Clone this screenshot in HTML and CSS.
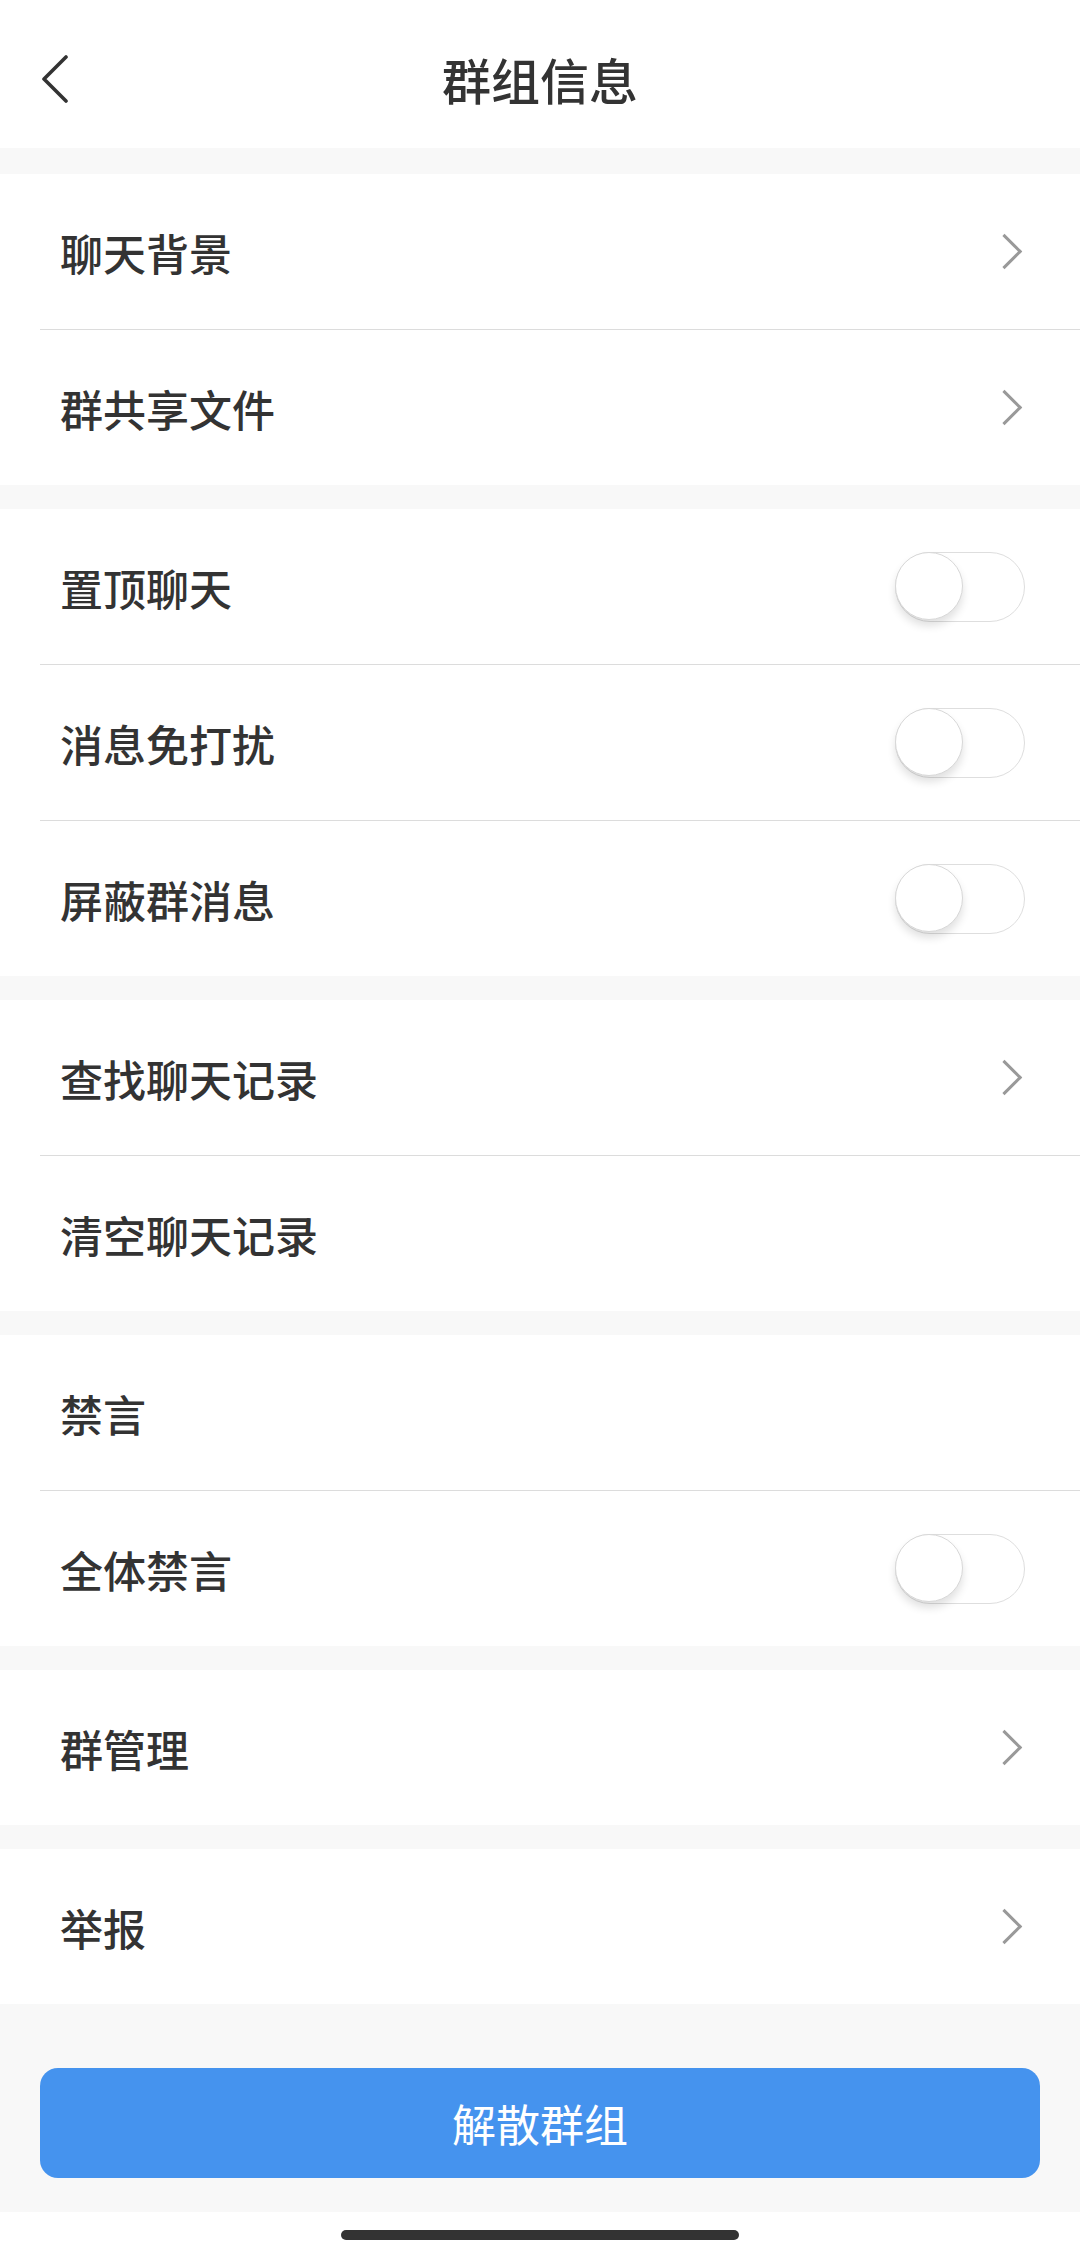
FILE: index.html
```html
<!DOCTYPE html>
<html lang="zh-CN">
  <head>
    <meta charset="UTF-8" />
    <meta name="viewport" content="width=device-width, initial-scale=1.0" />
    <title>群组信息</title>
    <link rel="stylesheet" href="styles.css">
  </head>

  <body>
    <div class="page">
      <!-- 顶部导航 -->
      <header class="nav">
        <svg class="back" width="40" height="60" viewBox="0 0 40 60">
          <polyline points="26,14 4,36 26,58" fill="none" stroke="#333" stroke-width="3.6" stroke-linecap="round" stroke-linejoin="round" />
        </svg>
        <h1>群组信息</h1>
      </header>

      <section class="group">
        <div class="row"><span>聊天背景</span><i class="arrow"></i></div>
        <div class="row"><span>群共享文件</span><i class="arrow"></i></div>
      </section>

      <section class="group">
        <div class="row"><span>置顶聊天</span><i class="switch"></i></div>
        <div class="row"><span>消息免打扰</span><i class="switch"></i></div>
        <div class="row"><span>屏蔽群消息</span><i class="switch"></i></div>
      </section>

      <section class="group">
        <div class="row"><span>查找聊天记录</span><i class="arrow"></i></div>
        <div class="row"><span>清空聊天记录</span></div>
      </section>

      <section class="group">
        <div class="row"><span>禁言</span></div>
        <div class="row"><span>全体禁言</span><i class="switch"></i></div>
      </section>

      <section class="group">
        <div class="row"><span>群管理</span><i class="arrow"></i></div>
      </section>

      <section class="group">
        <div class="row"><span>举报</span><i class="arrow"></i></div>
      </section>

      <div class="footer">
        <button class="danger">解散群组</button>
      </div>

      <div class="home"><span></span></div>
    </div>
  </body>
</html>
```

FILE: styles.css
```css
/* 기본 */
body {
  margin: 0;
  background: #fff;
  font-family: "Noto Sans CJK SC", "Noto Sans", sans-serif;
  color: #333;
}

.page {
  width: 1080px;
  height: 2254px;
  background: #f8f8f8;
  display: flex;
  flex-direction: column;
}

/* Nav */
.nav {
  height: 148px;
  margin-bottom: 26px;
  background: #fff;
  display: flex;
  align-items: center;
  justify-content: center;
  position: relative;
}

.nav h1 {
  margin: 8px 0 0;
  font-size: 49px;
  font-weight: 500;
  color: #333;
}

.nav .back {
  position: absolute;
  left: 40px;
  top: 43px;
}

/* Groups */
.group {
  background: #fff;
  margin-bottom: 24px;
}

.row {
  height: 155px;
  display: flex;
  align-items: center;
  justify-content: space-between;
  padding-left: 60px;
  padding-right: 55px;
  position: relative;
}

.row + .row {
  border-top: 1px solid #dcdcdc;
  margin-left: 40px;
  padding-left: 20px;
}

.row span {
  font-size: 43px;
  font-weight: 500;
  color: #333;
}

.arrow {
  width: 22px;
  height: 22px;
  border-top: 3px solid #999;
  border-right: 3px solid #999;
  transform: rotate(45deg);
  margin-right: 8px;
}

/* Switch */
.switch {
  width: 128px;
  height: 68px;
  border: 1.5px solid #dedede;
  border-radius: 36px;
  background: #fff;
  position: relative;
}

.switch::before {
  content: "";
  position: absolute;
  left: -1px;
  top: -1px;
  width: 68px;
  height: 68px;
  border-radius: 50%;
  background: #fff;
  border: 1.5px solid #d8d8d8;
  box-sizing: border-box;
  box-shadow: 0 6px 8px rgba(0, 0, 0, 0.12);
}

/* Footer */
.footer {
  padding: 64px 40px 34px;
  margin-top: -24px;
}

.danger {
  width: 100%;
  height: 110px;
  border: none;
  border-radius: 18px;
  background: #4593ee;
  color: #fff;
  font-family: inherit;
  font-size: 44px;
}

.home {
  flex: 1;
  background: #fff;
  display: flex;
  justify-content: center;
  padding-top: 18px;
}

.home span {
  width: 398px;
  height: 10px;
  border-radius: 5px;
  background: #333;
}
```
